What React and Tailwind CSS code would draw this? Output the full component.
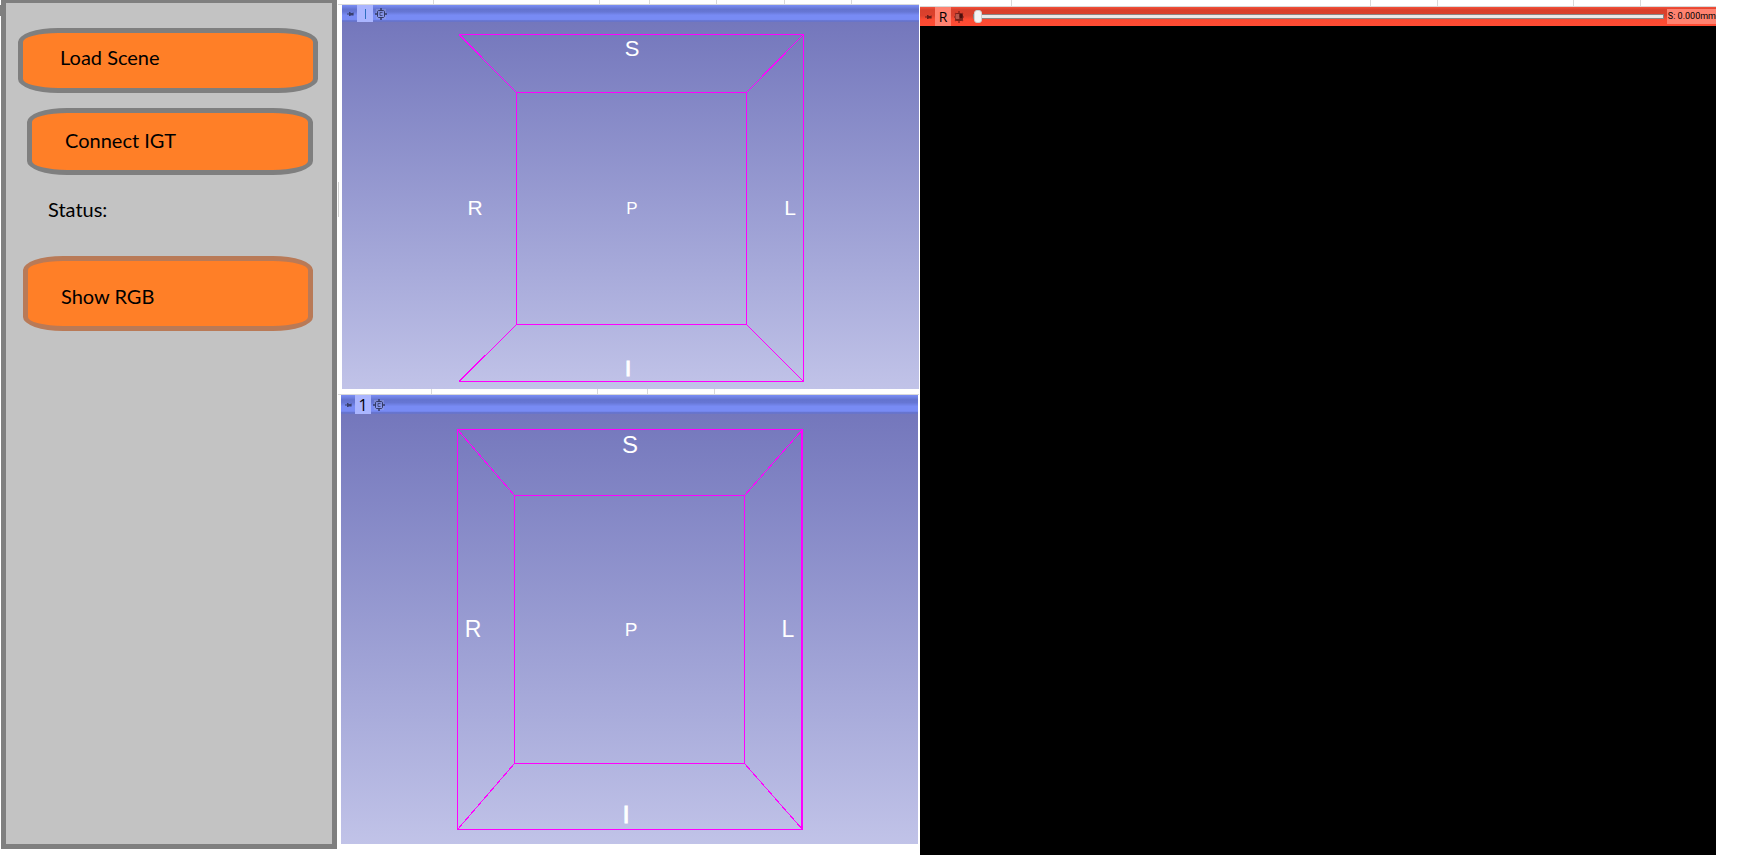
import { useState } from "react";

function Ruler({ segments, className }) {
  return (
    <div className={`flex shrink-0 overflow-hidden border-b border-[#d9d9d9] ${className}`}>
      {segments.map((w, i) => (
        <div key={i} className="shrink-0 border-r border-[#d9d9d9]" style={{ width: w }} />
      ))}
    </div>
  );
}

function PinIcon({ color }) {
  return (
    <svg viewBox="0 0 8 6" className="h-[6px] w-2" fill={color} aria-hidden="true">
      <rect x="0" y="2.5" width="3" height="1" />
      <rect x="2" y="1" width="1.5" height="4" />
      <rect x="3" y="2" width="3" height="2.4" />
      <rect x="5.5" y="1.5" width="1.5" height="3" opacity="0.6" />
    </svg>
  );
}

function CenterIcon() {
  return (
    <svg viewBox="0 0 12 12" className="size-3" fill="none" stroke="#333a66" aria-hidden="true">
      <rect x="1" y="1" width="10" height="10" fill="#a0aadf" stroke="none" opacity="0.4" />
      <path d="M3.4 2.5h5.2l.9.9v5.2l-.9.9H3.4l-.9-.9V3.4z" strokeWidth="1" />
      <path d="M6 0v2.5M6 9.5V12M0 6h2.5M9.5 6H12" strokeWidth="1.5" />
      <path d="M7.5 4.5H5v3h2.5" strokeWidth="0.8" />
    </svg>
  );
}

function SliceIcon() {
  return (
    <svg viewBox="0 0 12 12" className="size-3" aria-hidden="true">
      <path d="M6 0v12M1 6h10" stroke="#7a1f18" strokeWidth="1.2" />
      <path d="M2 2l8 8M10 2l-8 8" stroke="#a82c20" strokeWidth="1.2" />
      <rect x="2" y="2" width="8" height="8" rx="2" fill="#7a221a" />
      <rect x="2.5" y="3" width="4" height="5" rx="1" fill="#b8584c" />
      <rect x="6.5" y="3" width="3" height="4" rx="1" fill="#4a0f0c" />
    </svg>
  );
}

function Wireframe({ width, height, path, heavy, labels }) {
  return (
    <svg
      viewBox={`0 0 ${width} ${height}`}
      className="block h-full w-full font-['Liberation_Sans',sans-serif]"
      fill="none"
      stroke="#ff00ff"
    >
      <path d={path} shapeRendering="crispEdges" />
      {heavy && <path d={heavy} strokeWidth="2" shapeRendering="crispEdges" />}
      {labels.map(([text, x, y, size]) => (
        <text
          key={text}
          x={x}
          y={y}
          fontSize={size}
          textAnchor="middle"
          fill="white"
          stroke={text === "I" ? "white" : "none"}
        >
          {text}
        </text>
      ))}
    </svg>
  );
}

function View({ name, className, headerClass, nameClass, children }) {
  return (
    <section className={`flex min-h-0 basis-0 flex-col ${className}`}>
      <header
        className={`flex shrink-0 items-center bg-[linear-gradient(#7b8ef5_0%,#6373cf_25%,#6676d4_40%,#788bf4_60%,#788bf4_85%,#626fc6_94%,#6e78cc_100%)] ${headerClass}`}
      >
        <button aria-label="Pin view controls" className="flex">
          <PinIcon color="#39406f" />
        </button>
        <span
          className={`flex h-full items-center justify-center self-stretch bg-[#aab5ff] font-['Open_Sans',sans-serif] ${nameClass}`}
        >
          {name}
        </span>
        <button aria-label="Center view" className="ml-[2px] flex">
          <CenterIcon />
        </button>
      </header>
      <div className="min-h-0 flex-1 bg-linear-to-b from-[#7477bc] to-[#c1c3e8]">{children}</div>
    </section>
  );
}

const buttonBase =
  "flex items-center rounded-[40px/14px] border-5 bg-[#ff7f27] text-left";

export default function App() {
  const [offset, setOffset] = useState(0);
  return (
    <div className="flex h-screen bg-white text-black">
      <div className="mt-[5px] h-[11px] w-px shrink-0 bg-[#7f7f7f]" />
      <aside className="mb-[6px] flex w-[336px] shrink-0 flex-col border-5 border-t-3 border-[#7f7f7f] bg-[#c3c3c3] pt-[25px] font-[Lato,sans-serif] text-[20px] leading-6">
        <button className={`${buttonBase} mr-[14px] ml-3 h-[65px] border-[#7f7f7f] pb-2 pl-[37px]`}>
          Load Scene
        </button>
        <button className={`${buttonBase} mt-[15px] mr-[19px] ml-[21px] h-[67px] border-[#7f7f7f] pb-1 pl-[33px]`}>
          Connect IGT
        </button>
        <p className="mt-[22px] pl-[42px]">Status:</p>
        <button className={`${buttonBase} mt-[35px] mr-[19px] ml-[17px] h-[75px] border-[#b97a57] pt-1 pl-[33px]`}>
          Show RGB
        </button>
      </aside>

      <main className="flex min-w-0 flex-1 pr-[46px] pl-px">
        <div className="relative flex min-w-0 grow-581 basis-0 flex-col pb-[11px]">
          <div className="absolute top-[182px] left-0 h-[35px] w-px bg-[#d0d0d0]" />
          <Ruler className="h-[5px]" segments={[96, 166, 50, 67, 68, 67]} />
          <View
            name={<span className="h-[10px] w-px bg-[#2f6fc0]" />}
            className="ml-1 grow-384"
            headerClass="h-[17px] pl-[5px]"
            nameClass="ml-[2px] w-4"
          >
            <Wireframe
              width={577}
              height={367}
              path="M117 12.5H461.5V359.5H117M174.5 70.5H404.5V302.5H174.5ZM117 12.5L174.5 70.5M461.5 12.5L404.5 70.5M117 359.5L174.5 302.5M461.5 359.5L404.5 302.5"
              labels={[
                ["S", 290, 34, 22],
                ["R", 133, 193, 21],
                ["P", 290, 192, 17],
                ["L", 448, 193, 21],
                ["I", 286, 354, 22],
              ]}
            />
          </View>
          <Ruler className="h-[6px]" segments={[94, 166, 50, 67]} />
          <View
            name="1"
            className="mr-px ml-[3px] grow-449"
            headerClass="h-[19px] pl-1"
            nameClass="ml-[2px] w-4 text-[16px] leading-4"
          >
            <Wireframe
              width={577}
              height={430}
              path="M116.5 15.5H461.5V415.5H116.5ZM173.5 81.5H403.5V349.5H173.5ZM116.5 15.5L173.5 81.5M461.5 15.5L403.5 81.5M116.5 415.5L173.5 349.5M461.5 415.5L403.5 349.5"
              heavy="M461 15V416"
              labels={[
                ["S", 289, 39, 24],
                ["R", 132, 223, 23],
                ["P", 290, 222, 19],
                ["L", 447, 223, 23],
                ["I", 285, 409, 24],
              ]}
            />
          </View>
        </div>

        <section className="ml-px flex min-w-0 grow-796 basis-0 flex-col">
          <Ruler className="h-[7px]" segments={[92, 359, 67, 136, 67]} />
          <header className="flex h-[19px] shrink-0 items-center overflow-hidden bg-[linear-gradient(#f4503a_0%,#d8402c_15%,#dc412d_45%,#fb4a32_65%,#ff4b33_100%)] pl-[5px] font-['Open_Sans',sans-serif]">
            <button aria-label="Pin slice controls" className="flex">
              <PinIcon color="#6b1d18" />
            </button>
            <span className="ml-[2px] flex h-full w-4 items-center justify-center bg-[#ff8270] text-[14px] leading-4">
              R
            </span>
            <button aria-label="Slice options" className="ml-[2px] flex">
              <SliceIcon />
            </button>
            <input
              type="range"
              aria-label="Slice offset"
              min="0"
              max="100"
              value={offset}
              onChange={(e) => setOffset(Number(e.target.value))}
              className="ml-2 h-[14px] min-w-0 flex-1 appearance-none bg-transparent [&::-webkit-slider-runnable-track]:h-[5px] [&::-webkit-slider-runnable-track]:border [&::-webkit-slider-runnable-track]:border-[#8c8482] [&::-webkit-slider-runnable-track]:bg-[#ebe9e8] [&::-webkit-slider-thumb]:-mt-[5px] [&::-webkit-slider-thumb]:h-[13px] [&::-webkit-slider-thumb]:w-2 [&::-webkit-slider-thumb]:appearance-none [&::-webkit-slider-thumb]:rounded-[3px] [&::-webkit-slider-thumb]:border [&::-webkit-slider-thumb]:border-[#d0cfce] [&::-webkit-slider-thumb]:bg-[#f4f4f4]"
            />
            <output className="ml-[3px] h-[15px] min-w-12 bg-[#ff8270] pl-px font-[Roboto,sans-serif] text-[9px] leading-[15px] whitespace-nowrap">
              S: 0.000mm
            </output>
          </header>
          <div className="flex-1 bg-black" />
        </section>
      </main>
    </div>
  );
}
